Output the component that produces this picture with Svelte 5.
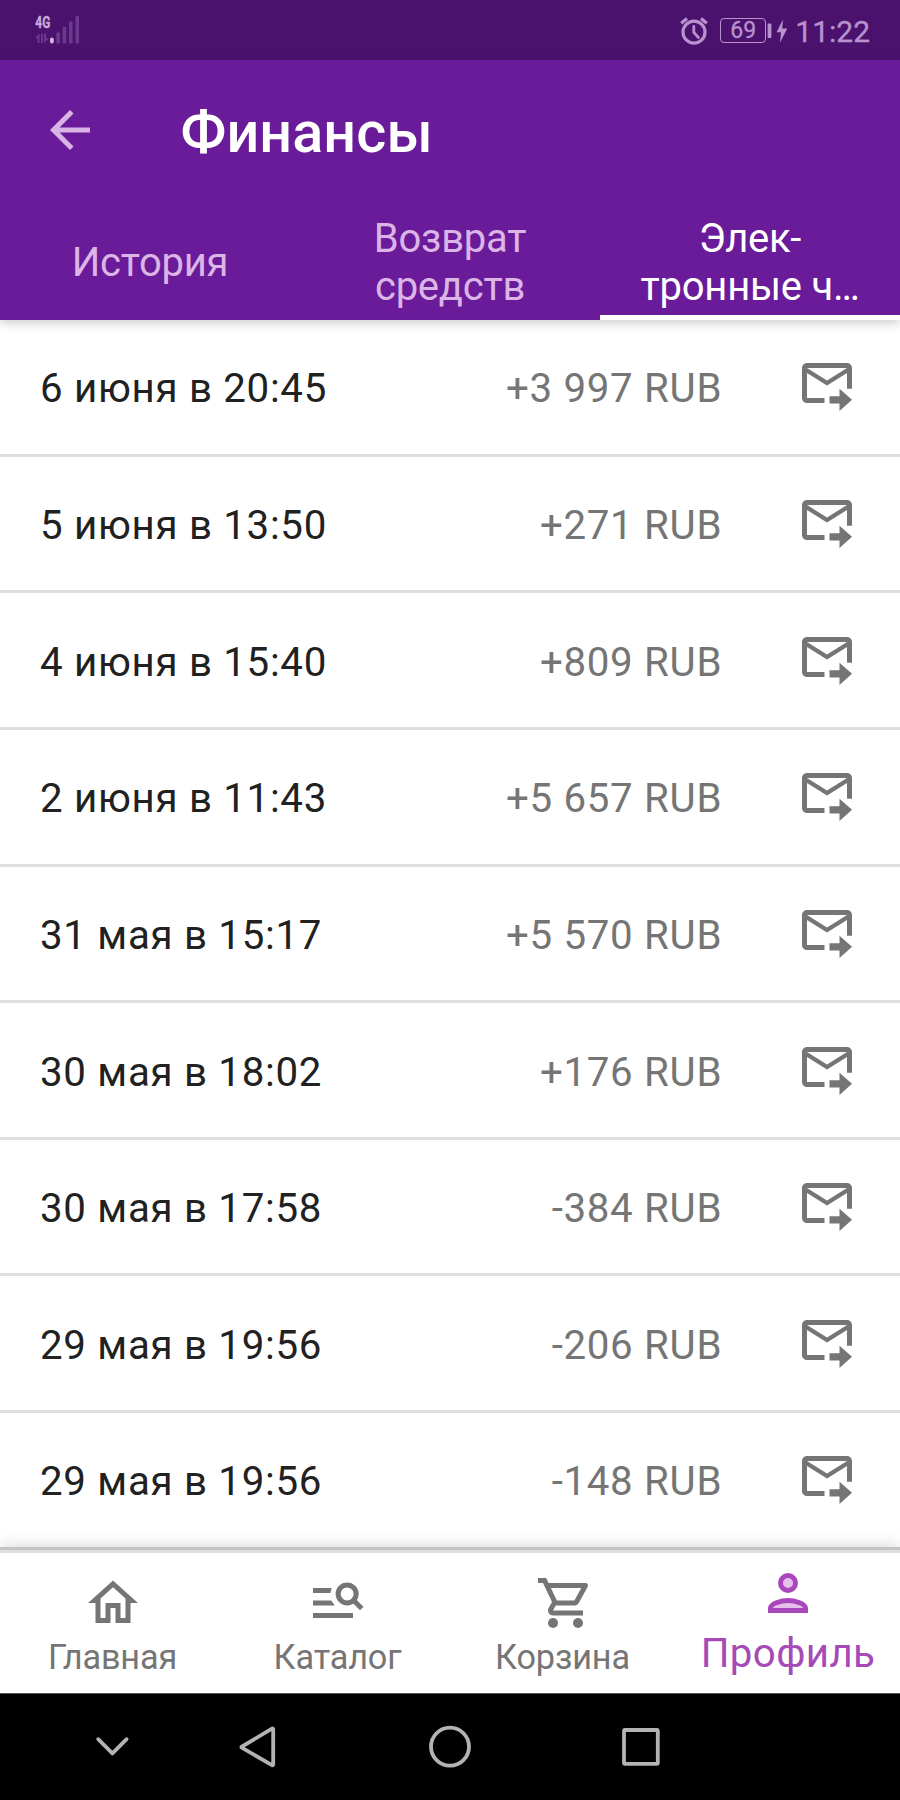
<script>
  const tabs = [
    { lines: ['История'] },
    { lines: ['Возврат', 'средств'] },
    { lines: ['Элек-', 'тронные ч…'], active: true },
  ];
  const operations = [
    ['6 июня в 20:45', '+3 997 RUB'],
    ['5 июня в 13:50', '+271 RUB'],
    ['4 июня в 15:40', '+809 RUB'],
    ['2 июня в 11:43', '+5 657 RUB'],
    ['31 мая в 15:17', '+5 570 RUB'],
    ['30 мая в 18:02', '+176 RUB'],
    ['30 мая в 17:58', '-384 RUB'],
    ['29 мая в 19:56', '-206 RUB'],
    ['29 мая в 19:56', '-148 RUB'],
  ];
</script>

<div class="screen">
  <div class="status">
    <svg class="signal" width="50" height="32" viewBox="0 0 50 32">
      <text x="2.3" y="14.2" textLength="15" lengthAdjust="spacingAndGlyphs">4G</text>
      <g fill="#6b3a8e">
        <path d="M2 24l4.600-4.500v9.500h-2v-4.500zM8 19.500h1.800v9.500h-1.800zM11 19.500v9.500l5-4.500h-2.800v-5z" />
        <rect x="23.300" y="18.500" width="3.600" height="11" rx="1" />
        <rect x="29.700" y="13" width="3.600" height="16.500" rx="1" />
        <rect x="36" y="7.500" width="3.600" height="22" rx="1" />
        <rect x="42.500" y="2" width="3.600" height="27.500" rx="1" />
      </g>
      <rect x="17" y="23.500" width="3.800" height="6" rx="1.900" fill="#d3b5df" />
    </svg>
    <div class="indicators">
      <svg width="28" height="28" viewBox="0 0 28 28" fill="none" stroke="#b891cf">
        <circle cx="14" cy="15.200" r="11" stroke-width="3.200" />
        <path d="M13.800 9.500v6l4.600 5" stroke-width="2.800" stroke-linecap="round" />
        <path d="M1.200 6.200l5.800-4.800M26.800 6.200l-5.800-4.800" stroke-width="3.200" />
      </svg>
      <div class="battery">69</div>
      <svg class="bolt" width="20" height="26" viewBox="0 0 20 26" fill="#b891cf">
        <rect x="0.600" y="5.500" width="3.800" height="14.500" rx="1" />
        <path d="M16 1.200L9.600 14.200h4.400l-1 10.600L20.200 10.600h-5z" />
      </svg>
      <span class="clock">11:22</span>
    </div>
  </div>

  <header>
    <div class="title-row">
      <svg width="60" height="60" viewBox="0 0 24 24" fill="#d8b4e4">
        <path d="M20 11H7.830l5.590-5.590L12 4l-8 8 8 8 1.410-1.410L7.830 13H20v-2z" />
      </svg>
      <h1>Финансы</h1>
    </div>
    <nav class="tabs">
      {#each tabs as tab}
        <div class="tab" class:active={tab.active}>
          {#each tab.lines as line}<span>{line}</span>{/each}
        </div>
      {/each}
    </nav>
  </header>

  <main>
    {#each operations as [date, amount]}
      <div class="row">
        <span class="date">{date}</span>
        <span class="amount">{amount}</span>
        <svg width="60" height="60" viewBox="0 0 24 24" fill="#757575">
          <path
            fill-rule="evenodd"
            d="M20 4H4C2.900 4 2 4.900 2 6v12c0 1.100.900 2 2 2h7v-2H4V8l8 5 8-5v6.250h2V6c0-1.100-.900-2-2-2zM12 11L4 6h16z"
          />
          <path d="M17 14.250l5 4.400-5 4.500v-3H13v-2.900h4z" />
        </svg>
      </div>
    {/each}
  </main>

  <nav class="bottom">
    <div class="item">
      <svg width="60" height="60" viewBox="0 0 24 24" fill="#757575">
        <path d="M12 5.690l5 4.500V18h-2v-6H9v6H7v-7.810l5-4.500M12 3L2 12h3v8h6v-6h2v6h6v-8h3L12 3z" />
      </svg>
      <span>Главная</span>
    </div>
    <div class="item">
      <svg width="60" height="60" viewBox="0 0 24 24" fill="#757575">
        <path d="M2 6h7.450l-.500 2H2zM2 11h7.300l1.400 2H2zM2 16h16v2H2z" />
        <circle cx="15.650" cy="8.350" r="3.600" fill="none" stroke="#757575" stroke-width="2" />
        <path d="M18.200 10.900l3.300 3.300" stroke="#757575" stroke-width="2" />
      </svg>
      <span>Каталог</span>
    </div>
    <div class="item">
      <svg width="60" height="60" viewBox="-1 0 24 24" fill="#757575">
        <path
          d="M15.550 13c.750 0 1.410-.410 1.750-1.030l3.580-6.490c.370-.660-.110-1.480-.870-1.480H5.210l-.940-2H1v2h2l3.600 7.590-1.350 2.440C4.520 15.370 5.480 17 7 17h12v-2H7l1.100-2h7.450zM6.160 6h12.150l-2.760 5H8.530L6.160 6z"
        />
        <circle cx="7" cy="20" r="2" />
        <circle cx="17" cy="20" r="2" />
      </svg>
      <span>Корзина</span>
    </div>
    <div class="item current">
      <svg width="60" height="60" viewBox="0 0 24 24">
        <g fill="#e6c0ed" stroke="#ab47bc" stroke-width="2">
          <circle cx="12" cy="8" r="3" />
          <path d="M5 19v-1c0-1.600 4-3 7-3s7 1.400 7 3v1z" />
        </g>
      </svg>
      <span>Профиль</span>
    </div>
  </nav>

  <div class="system">
    <svg width="900" height="106" viewBox="0 0 900 106" fill="none" stroke="#b3b3b3" stroke-width="3.800" stroke-linejoin="round" stroke-linecap="round">
      <path d="M98.200 45.200l14.200 14.200 14.200-14.200" />
      <path d="M241.800 52.700L272 34.600q1.200-.600 1.200.800v34.900q0 1.500-1.200.800L241.800 53.700q-.800-.500 0-1z" />
      <circle cx="450" cy="52.700" r="19" />
      <rect x="624" y="36" width="33.800" height="33.800" rx="1" />
    </svg>
  </div>
</div>

<style>
  :global(body) {
    margin: 0;
    background: #fff;
  }
  .screen {
    width: 900px;
    height: 1800px;
    display: flex;
    flex-direction: column;
    overflow: hidden;
    background: #fff;
    font-family: Roboto, sans-serif;
  }
  svg {
    display: block;
    flex: none;
  }
  .status {
    height: 60px;
    flex: none;
    box-sizing: border-box;
    padding: 0 30px 0 33px;
    background: #4a126c;
    display: flex;
    justify-content: space-between;
    align-items: center;
    color: #b891cf;
  }
  .signal text {
    font: 700 16.5px Roboto, sans-serif;
    fill: #c9a8da;
    stroke: #c9a8da;
    stroke-width: 0.4px;
  }
  .indicators {
    display: flex;
    align-items: center;
    padding-top: 1px;
  }
  .battery {
    box-sizing: border-box;
    width: 46px;
    height: 25px;
    margin-left: 12px;
    border: 1.500px solid #b891cf;
    border-radius: 4px;
    font-size: 23px;
    line-height: 24px;
    text-align: center;
    -webkit-text-stroke: 0.3px #b891cf;
  }
  .bolt {
    margin-left: 1px;
  }
  .clock {
    font-size: 30px;
    line-height: 36px;
    margin-left: 8px;
    padding-top: 2px;
    -webkit-text-stroke: 0.3px #b891cf;
  }
  header {
    height: 260px;
    flex: none;
    background: #6a1b99;
    position: relative;
    z-index: 1;
    box-shadow: 0 3px 10px rgba(0, 0, 0, 0.2);
  }
  .title-row {
    height: 140px;
    display: flex;
    align-items: center;
    padding-left: 40px;
  }
  h1 {
    margin: 6px 0 0 80.500px;
    color: #fff;
    font-size: 57.5px;
    line-height: 68px;
    font-weight: 500;
    letter-spacing: 0.100px;
  }
  .tabs {
    height: 120px;
    display: grid;
    grid-template-columns: repeat(3, 1fr);
  }
  .tab {
    box-sizing: border-box;
    padding-top: 5px;
    display: flex;
    flex-direction: column;
    align-items: center;
    justify-content: center;
    color: #dab5e6;
    font-size: 40px;
    line-height: 47.500px;
    letter-spacing: -0.250px;
  }
  .tab.active {
    color: #fff;
    box-shadow: inset 0 -5px #fff;
  }
  main {
    flex: 1;
    min-height: 0;
    overflow: hidden;
  }
  .row {
    box-sizing: border-box;
    height: 136.650px;
    border-bottom: 3px solid #dedede;
    padding: 0 43.300px 0 40px;
    display: flex;
    align-items: center;
    font-size: 40.250px;
    line-height: 48px;
    letter-spacing: 0.700px;
  }
  .row span {
    padding-top: 5px;
  }
  .row:last-child {
    border-bottom-color: transparent;
  }
  .date {
    color: #212121;
  }
  .amount {
    margin-left: auto;
    margin-right: 74.500px;
    color: #757575;
  }
  .row svg {
    margin-top: -7px;
  }
  .bottom {
    height: 140px;
    flex: none;
    display: grid;
    grid-template-columns: repeat(4, 1fr);
    background: #fff;
    border-top: 3px solid #dedede;
    box-shadow: 0 -3px #c4c4c4, 0 -5px 14px rgba(0, 0, 0, 0.14);
    border-bottom: 1px solid #555;
    position: relative;
    z-index: 1;
  }
  .item {
    box-sizing: border-box;
    padding-top: 20px;
    display: flex;
    flex-direction: column;
    align-items: center;
    color: #757575;
    font-size: 34.250px;
    line-height: 40px;
  }
  .item span {
    margin-top: 4px;
    letter-spacing: -0.150px;
  }
  .current {
    padding-top: 10px;
    color: #a54bb6;
    font-size: 40.250px;
    line-height: 48px;
  }
  .current span {
    margin-top: 6.500px;
    letter-spacing: 0.400px;
    padding-left: 1px;
  }
  .system {
    height: 106px;
    flex: none;
    background: #000;
  }
</style>
